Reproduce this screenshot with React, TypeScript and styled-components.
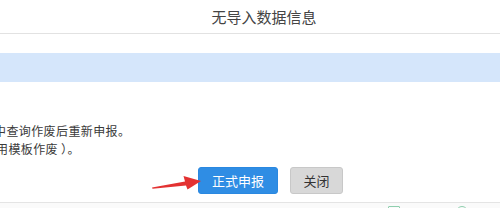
import styled, { createGlobalStyle } from 'styled-components';

const GlobalStyle = createGlobalStyle`
  html, body {
    margin: 0;
    padding: 0;
    background: #fff;
    overflow: hidden;
  }
  body {
    font-family: 'Noto Sans CJK SC', 'Noto Sans', sans-serif;
  }
`;

const Page = styled.div`
  position: relative;
  width: 500px;
  height: 208px;
  overflow: hidden;
  background: #fff;
`;

const Header = styled.div`
  height: 33px;
  display: flex;
  align-items: center;
  justify-content: center;
  padding-left: 28px;
  font-size: 15px;
  color: #444;
  border-bottom: 1px solid #e2e2e2;
`;

const InfoBand = styled.div`
  margin-top: 19px;
  height: 29px;
  background: #d5e6fb;
`;

const Message = styled.div`
  margin-top: 40px;
  font-size: 12px;
  line-height: 18px;
  letter-spacing: 0.4px;
  color: #3a3a3a;
`;

interface LineProps {
  $shift: number;
}

const Line = styled.div<LineProps>`
  margin-left: ${(p) => p.$shift}px;
  white-space: nowrap;
`;

const ButtonRow = styled.div`
  display: flex;
  gap: 12px;
  margin-top: 9px;
  padding-left: 198px;
  height: 27px;
`;

const Button = styled.button<{ $primary?: boolean }>`
  height: 27px;
  border-radius: 3px;
  border: 1px solid ${(p) => (p.$primary ? '#2a88e0' : '#c8c8c8')};
  background: ${(p) => (p.$primary ? '#2f8de4' : '#d8d8d8')};
  color: ${(p) => (p.$primary ? '#fff' : '#333')};
  font-family: inherit;
  font-size: 13px;
  padding: 0;
  width: ${(p) => (p.$primary ? 80 : 53)}px;
  cursor: pointer;
`;

const Footer = styled.div`
  margin-top: 8px;
  height: 20px;
  border-top: 1px solid #e4e4e4;
  background: #fafafa;
  display: flex;
  gap: 56px;
  padding-left: 388px;
  padding-top: 3px;
`;

const FooterIcon = styled.div<{ $round?: boolean }>`
  width: 10px;
  height: 10px;
  border: 1px solid #8fcfae;
  border-radius: ${(p) => (p.$round ? '50%' : '1px')};
`;

const Arrow = styled.svg`
  position: absolute;
  left: 150px;
  top: 172px;
`;

const App = () => {
  return (
    <Page>
      <GlobalStyle />
      <Header>无导入数据信息</Header>
      <InfoBand />
      <Message>
        <Line $shift={-6}>中查询作废后重新申报。</Line>
        <Line $shift={-4}>用模板作废 ）。</Line>
      </Message>
      <ButtonRow>
        <Button $primary>正式申报</Button>
        <Button>关闭</Button>
      </ButtonRow>
      <Footer>
        <FooterIcon />
        <FooterIcon $round />
      </Footer>
      <Arrow width='54' height='22' viewBox='0 0 54 22'>
        <path d='M2 15.5 L35 9.5 L33.5 4 L51 9 L37.5 17.5 L36 13.5 L2.5 16.8 Z' fill='#e33232' />
      </Arrow>
    </Page>
  );
};

export default App;
